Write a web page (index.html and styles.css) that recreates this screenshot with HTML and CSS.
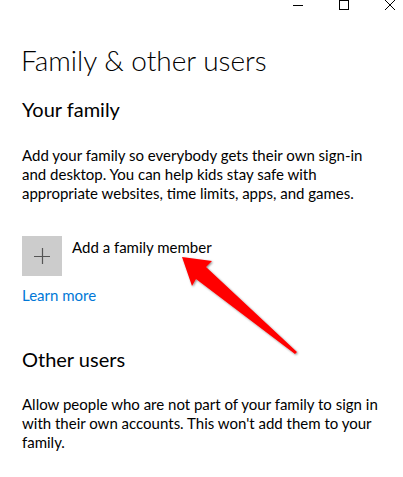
FILE: index.html
```html
<!DOCTYPE html>
<html lang="en">
<head>
<meta charset="utf-8">
<title>Family &amp; other users</title>
<link rel="stylesheet" href="styles.css">
</head>
<body>
<div class="titlebar">
  <svg class="ctl" width="10" height="10" viewBox="0 0 10 10"><path d="M0 5.5H10" stroke="#000" stroke-width="1"/></svg>
  <svg class="ctl" width="10" height="10" viewBox="0 0 10 10"><rect x="0.5" y="0.5" width="9" height="9" fill="none" stroke="#000" stroke-width="1"/></svg>
  <svg class="ctl" width="10" height="10" viewBox="0 0 10 10"><path d="M0 0L10 10M10 0L0 10" stroke="#000" stroke-width="1"/></svg>
</div>
<main class="page">
  <h1 class="title">Family &amp; other users</h1>
  <section class="family">
    <h2 class="heading">Your family</h2>
    <p class="desc">Add your family so everybody gets their own sign-in and desktop. You can help kids stay safe with appropriate websites, time limits, apps, and games.</p>
    <div class="add-row">
      <span class="plus-box"><svg width="16" height="16" viewBox="0 0 16 16"><path d="M0 8.5H16M8.5 0V16" stroke="#555" stroke-width="1.2"/></svg></span>
      <span class="add-label">Add a family member</span>
    </div>
    <a class="learn" href="#">Learn more</a>
  </section>
  <section class="others">
    <h2 class="heading">Other users</h2>
    <p class="desc">Allow people who are not part of your family to sign in with their own accounts. This won't add them to your family.</p>
  </section>
</main>
<svg class="arrow" width="403" height="477" viewBox="0 0 403 477">
  <defs>
    <filter id="sh" x="-20%" y="-20%" width="140%" height="140%">
      <feDropShadow dx="1" dy="1" stdDeviation="1" flood-color="#000" flood-opacity="0.45"/>
    </filter>
  </defs>
  <polygon points="182,257 212,261 206,267 297,352 295,354 196,279 192,286" fill="#ff0000" filter="url(#sh)"/>
</svg>
</body>
</html>
```

FILE: styles.css
```css
html, body {
  margin: 0;
  padding: 0;
  background: #fff;
}
body {
  width: 403px;
  height: 477px;
  overflow: hidden;
  position: relative;
  font-family: "Lato", "Noto Sans", sans-serif;
  color: #000;
}
.titlebar {
  display: flex;
  justify-content: flex-end;
  gap: 36px;
  padding-right: 8px;
  height: 11px;
}
.ctl {
  display: block;
}
.page {
  padding-left: 22px;
}
.title {
  margin: 31px 0 0 -1px;
  font-size: 28px;
  font-weight: 300;
  line-height: 36px;
}
.heading {
  margin: 17px 0 0;
  font-size: 20px;
  font-weight: 400;
  line-height: 28px;
}
.desc {
  margin: 23px 0 0;
  font-size: 15px;
  line-height: 19px;
  width: 360px;
}
.add-row {
  display: flex;
  align-items: flex-start;
  gap: 10px;
  margin-top: 33px;
}
.plus-box {
  width: 40px;
  height: 40px;
  background: #cccccc;
  display: flex;
  align-items: center;
  justify-content: center;
}
.plus-box svg {
  display: block;
}
.add-label {
  font-size: 15px;
  line-height: 19px;
  padding-top: 2px;
}
.learn {
  display: block;
  margin-top: 10px;
  font-size: 15px;
  line-height: 19px;
  color: #0078d7;
  text-decoration: none;
}
.others .heading {
  margin-top: 40px;
}
.others .desc {
  margin-top: 22px;
}
.arrow {
  position: absolute;
  left: 0;
  top: 0;
  pointer-events: none;
}
```
